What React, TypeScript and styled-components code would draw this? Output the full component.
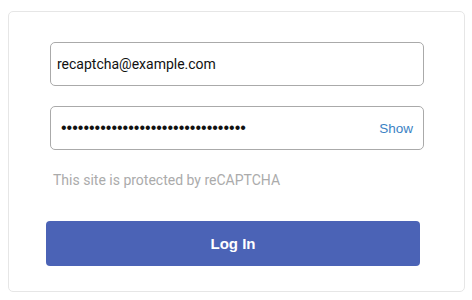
import React from "react";
import styled, { createGlobalStyle } from "styled-components";

const Global = createGlobalStyle`
  html, body { margin: 0; padding: 0; background: #ffffff; }
  body { font-family: Roboto, "Liberation Sans", Arial, sans-serif; }
  * { box-sizing: border-box; }
`;

const Page = styled.div`
  width: 472px;
  height: 300px;
  padding: 11px 7px 8px 8px;
`;

const Card = styled.form`
  width: 457px;
  height: 281px;
  border: 1px solid #e6e6e6;
  border-radius: 5px;
  padding: 30px 41px 0 37px;
  display: flex;
  flex-direction: column;
`;

const FieldBox = styled.div<{ $mt?: number; $pl?: number }>`
  margin-left: 4px;
  margin-top: ${(p) => p.$mt ?? 0}px;
  width: 374px;
  height: 44px;
  border: 1px solid #aaaaaa;
  border-radius: 5px;
  display: flex;
  align-items: center;
  padding: 0 10px 0 ${(p) => p.$pl ?? 6}px;
  background: #fff;
`;

const Input = styled.input`
  flex: 1;
  min-width: 0;
  border: none;
  outline: none;
  background: transparent;
  font-family: Roboto, "Liberation Sans", Arial, sans-serif;
  font-size: 14px;
  color: #111;
  padding: 0;
  &[type="password"] {
    font-family: "Liberation Sans", Arial, sans-serif;
    font-size: 16px;
  }
`;

const ShowLink = styled.span`
  font-family: "Liberation Sans", Arial, sans-serif;
  font-size: 13.5px;
  color: #3b82c4;
  cursor: pointer;
`;

const Note = styled.p`
  margin: 21px 0 0 7px;
  font-family: Roboto, "Liberation Sans", Arial, sans-serif;
  font-size: 14px;
  color: #ababab;
  line-height: 18px;
`;

const Submit = styled.button`
  margin-top: 32px;
  width: 374px;
  height: 45px;
  border: none;
  border-radius: 4px;
  background: #4b63b6;
  color: #ffffff;
  font-family: "Liberation Sans", Arial, sans-serif;
  font-weight: bold;
  font-size: 15px;
  cursor: pointer;
`;

export default function App() {
  return (
    <>
      <Global />
      <Page>
        <Card onSubmit={(e) => e.preventDefault()}>
          <FieldBox>
            <Input type="email" readOnly defaultValue="recaptcha@example.com" />
          </FieldBox>
          <FieldBox $mt={20} $pl={10}>
            <Input type="password" readOnly defaultValue={"x".repeat(33)} />
            <ShowLink>Show</ShowLink>
          </FieldBox>
          <Note>This site is protected by reCAPTCHA</Note>
          <Submit type="submit">Log In</Submit>
        </Card>
      </Page>
    </>
  );
}
